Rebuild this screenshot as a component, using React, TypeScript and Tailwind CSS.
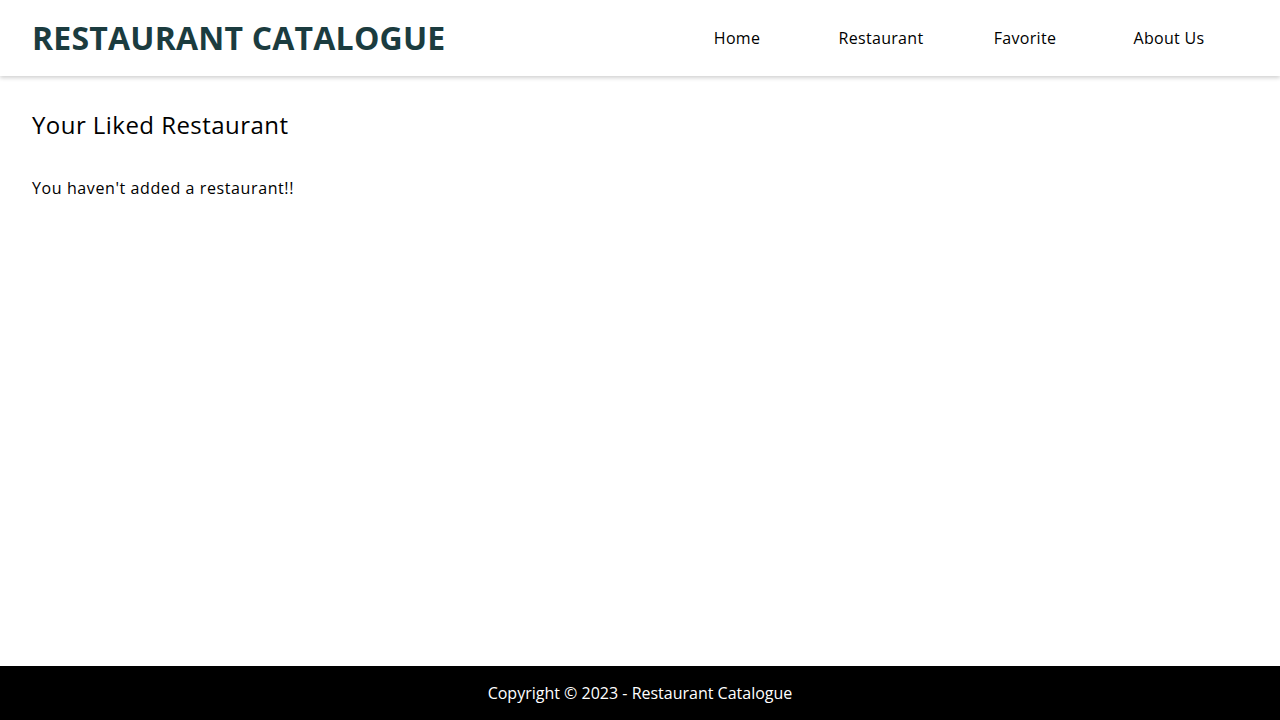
export default function App() {
  const links = ["Home", "Restaurant", "Favorite", "About Us"];
  return (
    <div className="min-h-screen flex flex-col bg-white text-black" style={{ fontFamily: '"Open Sans", sans-serif' }}>
      <header className="h-[76px] flex items-center justify-between pl-8 pr-[39px] bg-white shadow-[0_2px_4px_rgba(0,0,0,0.18)] relative z-10">
        <h1 className="text-[32px] font-bold text-[#1b3c3f] tracking-[0.2px] leading-none">RESTAURANT CATALOGUE</h1>
        <nav>
          <ul className="flex">
            {links.map((l) => (
              <li key={l} className="w-[144px] text-center text-[16px] leading-none tracking-[0.3px]">
                <a href="#">{l}</a>
              </li>
            ))}
          </ul>
        </nav>
      </header>
      <main className="flex-1 px-8 pt-[35px]">
        <h2 className="text-[24px] leading-[28px] tracking-[0.45px]">Your Liked Restaurant</h2>
        <p className="mt-[37px] text-[16px] leading-[24px] tracking-[0.6px]">You haven't added a restaurant!!</p>
      </main>
      <footer className="h-[54px] bg-black text-white flex items-center justify-center text-[16px]">
        Copyright © 2023 - Restaurant Catalogue
      </footer>
    </div>
  );
}
